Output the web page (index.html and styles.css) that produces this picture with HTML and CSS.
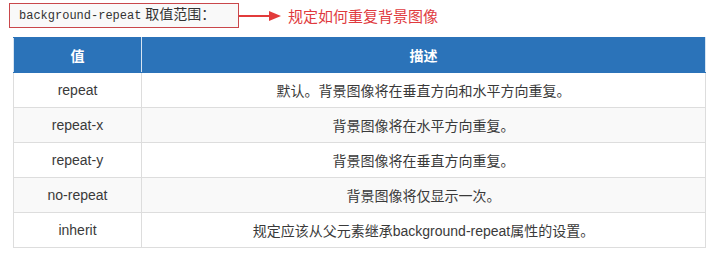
FILE: index.html
```html
<!DOCTYPE html>
<html lang="zh-CN">
<head>
    <meta charset="UTF-8">
    <title>background-repeat</title>
    <link rel="stylesheet" href="styles.css">
</head>
<body>
    <div class="intro">
        <div class="code-box"><code>background-repeat</code> 取值范围：</div>
        <svg class="arrow" width="44" height="12" viewBox="0 0 44 12">
            <line x1="0" y1="6" x2="32" y2="6" stroke="#e23b3b" stroke-width="2"/>
            <polygon points="30,1 42,6 30,11" fill="#e23b3b"/>
        </svg>
        <span class="note">规定如何重复背景图像</span>
    </div>

    <table class="values">
        <thead>
            <tr>
                <th class="col-value">值</th>
                <th>描述</th>
            </tr>
        </thead>
        <tbody>
            <tr><td>repeat</td><td>默认。背景图像将在垂直方向和水平方向重复。</td></tr>
            <tr><td>repeat-x</td><td>背景图像将在水平方向重复。</td></tr>
            <tr><td>repeat-y</td><td>背景图像将在垂直方向重复。</td></tr>
            <tr><td>no-repeat</td><td>背景图像将仅显示一次。</td></tr>
            <tr><td>inherit</td><td>规定应该从父元素继承background-repeat属性的设置。</td></tr>
        </tbody>
    </table>
</body>
</html>
```

FILE: styles.css
```css
body {
    margin: 0;
    background: #fff;
    font-family: "Liberation Sans", Arial, "Noto Sans CJK SC", sans-serif;
    color: #3a3a3a;
}

.intro {
    display: flex;
    align-items: center;
    margin: 3px 0 0 9px;
    height: 25px;
}

.code-box {
    box-sizing: border-box;
    width: 230px;
    height: 25px;
    padding: 0 0 0 9px;
    border: 1px solid #c9474b;
    background: #f9f9f9;
    font-size: 14px;
    line-height: 21px;
    color: #333;
}

code {
    font-family: "Liberation Mono", "Courier New", monospace;
    font-size: 12px;
}

.arrow {
    display: block;
    margin-top: 1px;
}

.note {
    margin-left: 5px;
    font-size: 15px;
    color: #e03a3e;
    font-family: "Noto Sans CJK SC", sans-serif;
}

.values {
    margin: 9px 0 0 13px;
    width: 693px;
    border-collapse: collapse;
    border: 1px solid #ddd;
    font-size: 14px;
}

.values th,
.values td {
    height: 34px;
    padding: 0;
    text-align: center;
    border: 1px solid #ddd;
}

.values th {
    background: #2b73b9;
    color: #fff;
    font-weight: bold;
    font-size: 14px;
    border-color: #2b73b9 #d6e4f2;
}

.col-value {
    width: 127px;
}

.values tbody tr:nth-child(even) td {
    background: #f9f9f9;
}
```
